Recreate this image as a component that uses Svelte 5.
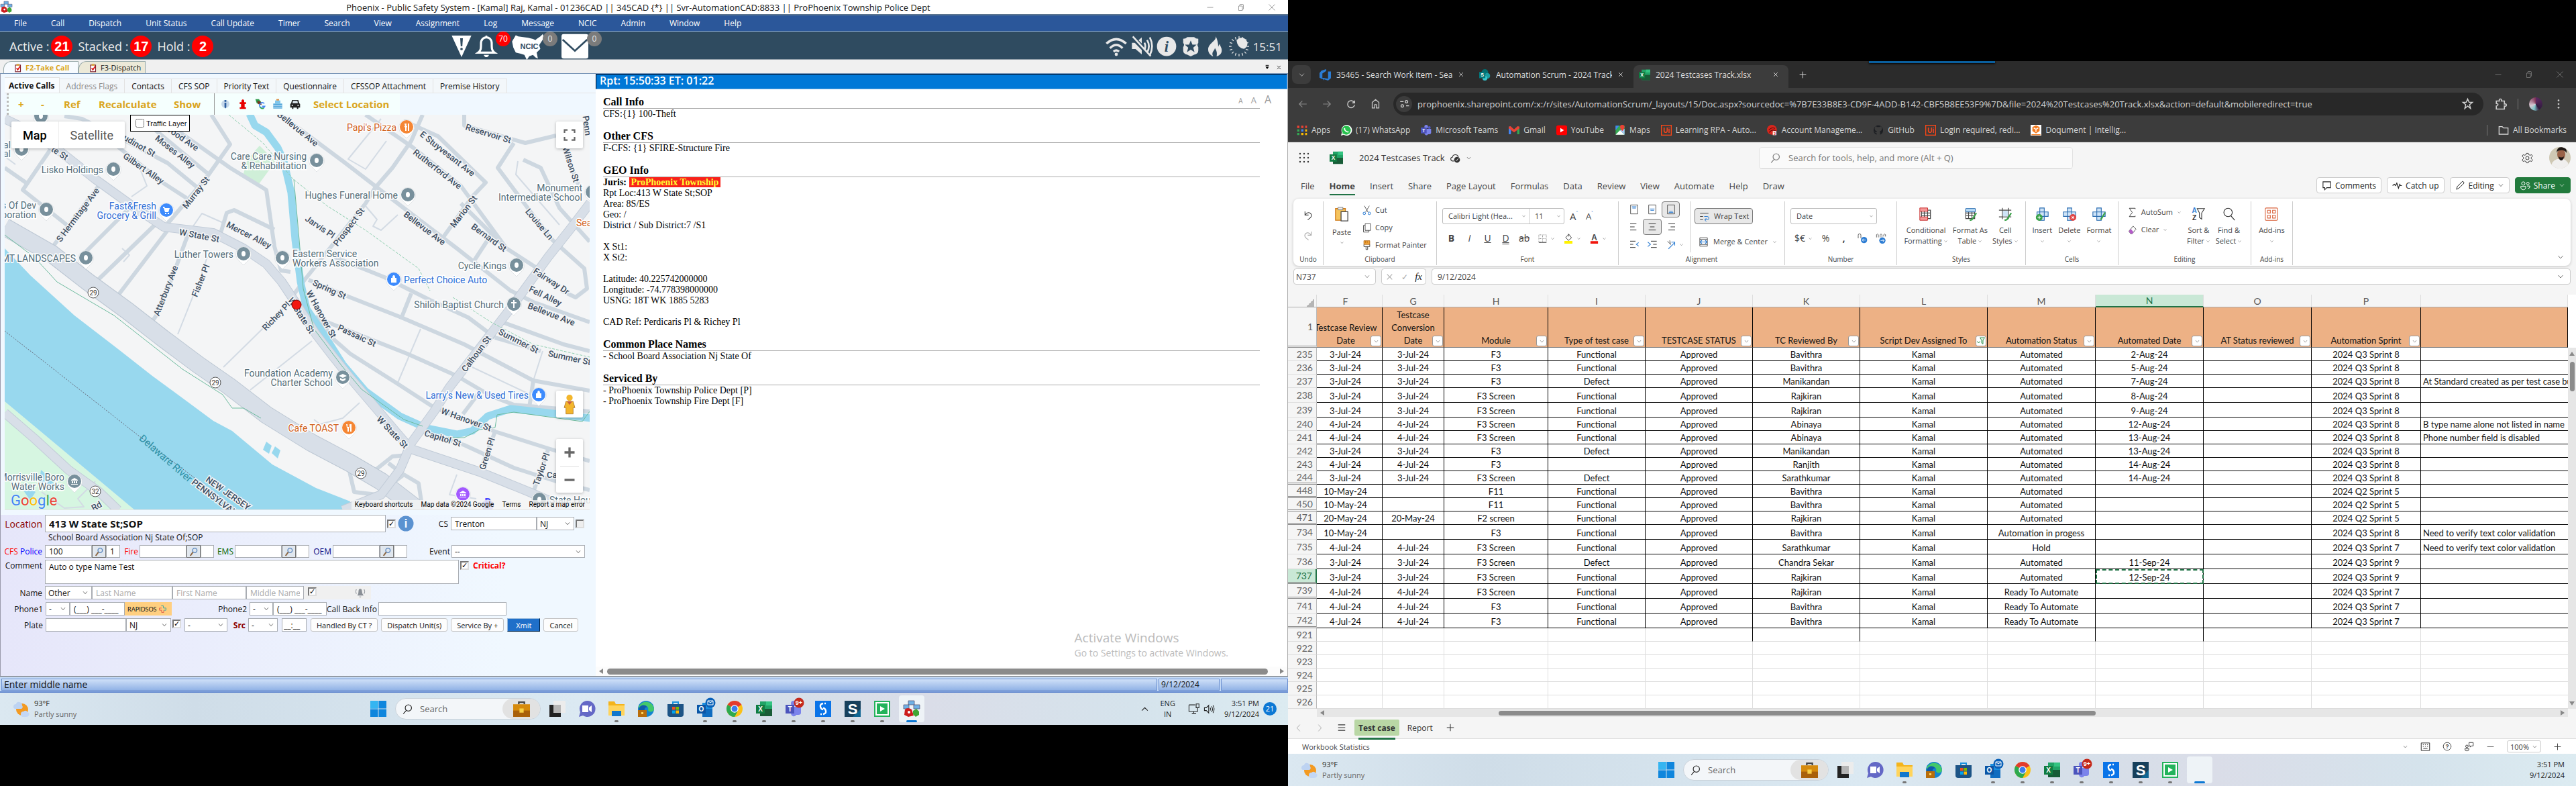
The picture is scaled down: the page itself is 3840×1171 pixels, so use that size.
<script>
  const circle = (x, y, r) => `M${x - r} ${y}a${r} ${r} 0 1 0 ${2 * r} 0a${r} ${r} 0 1 0 ${-2 * r} 0z`;
  const line = (d, s = 'currentColor', w = 1.5) => ({ d, s, w });
  const fill = (d, f = 'currentColor') => ({ d, f });
  const glyph = (t, x, y, size, f = '#fff') => ({ t, x, y, size, f });

  const sheetGrid = [line('M4 5h16v15H4zM4 10h16M4 15h16M9 5v15M15 5v15', '#444', 1.4)];

  const icons = {
    chev: [line('M5 8l7 8 7-8')],
    up: [line('M4 16l8-8 8 8', 'currentColor', 2)],
    close: [line('M5 5l14 14M19 5L5 19', 'currentColor', 2)],
    thinClose: [line('M3 3l18 18M21 3L3 21', 'currentColor', 1.5)],
    minus: [line('M3 12h18')],
    plus: [line('M12 3v18M3 12h18', 'currentColor', 1.8)],
    restore: [line('M5 8h11v13H5zM8 8V5q0-2 2-2h7q2 0 2 2v11q0 2-2 2h-1', 'currentColor', 1.4)],
    bigPlus: [line('M12 3v18M3 12h18', '#666', 4)],
    bigMinus: [line('M3 12h18', '#666', 4)],
    alert: [fill('M1 0h22L12 24z'), fill('M10.500 3h3l-.6 9h-1.800z', '#2f4b60'), fill(circle(12, 15, 1.4), '#2f4b60')],
    bell: [line('M3 19c3-2 3-5 3-10 0-5 3-7 6-7s6 2 6 7c0 5 0 8 3 10z', 'currentColor', 2.4), fill('M9 21.500h6q-1 2.500-3 2.500t-3-2.500zM11 0h2v3h-2z')],
    usa: [fill('M1 3l2 1 8 1 4 1 2 1 1-1 3-2 2-2 1 3-2 3-2 3 1 3-3 3 1 5-2-1-2-2-3 1-2 3-2-4-3-1-4-1-2-4-1-5z'), glyph('NCIC', 12, 14, 6, '#2f4b60')],
    mail: [fill('M2 1h20q2 0 2 2v18q0 2-2 2H2q-2 0-2-2V3q0-2 2-2z'), line('M1 6l11 10L23 6', '#2f4b60', 1.6)],
    wifi: [line('M1 9q11-10 22 0M5 14q7-7 14 0M9 18q3-3 6 0', 'currentColor', 2.6), fill(circle(12, 21, 1.8))],
    mute: [fill('M1 8h4l7-6v19l-7-6H1z'), line('M1 1l21 22', '#2f4b60', 5), line('M2 1l20 22M15 8q2 4 0 8M18 5q4 7 0 14M21 2q5 10 0 20', 'currentColor', 2)],
    info: [fill(circle(12, 12, 11.500)), { ...glyph('i', 12, 18, 18, '#2f4b60'), serif: true }],
    infoBlue: [fill(circle(12, 12, 11.500), '#5b92d0'), glyph('i', 12, 18, 18, '#eef5ff')],
    shield: [fill('M3 3q3 0 5-2h8q2 2 5 2v5q-2 2 0 5v4q0 4-5 5l-4 2-4-2q-5-1-5-5v-4q2-3 0-5z'), fill('M12 5l2 5 5 0-4 3.500 1.500 5.500L12 16l-4.500 3L9 13.500 5 10l5 0z', '#2f4b60')],
    fire: [fill('M13 0c1 6-9 8-9 16 0 4 3 7 6 8-3-5 2-7 2-10 2 3 3 6 2 10 4-1 7-4 6-9-1-3-2-4-2-6-1 1-2 3-2 4 0-5-1-9-3-13z')],
    sunMoon: [line('M12 0v3M12 21v3M0 12h3M21 12h3M3.500 3.500l2 2M18.500 18.500l2 2M3.500 20.500l2-2M18.500 5.500l2-2M7.500 1l1 3M16.500 1l-1 3M7.500 23l1-3M16.500 23l-1-3M1 7.500l3 1M1 16.500l3-1M23 7.500l-3 1M23 16.500l-3-1', 'currentColor', 1), fill('M9 5a7 7 0 1 1 9 10q-8-1-9-10z')],
    clip: [fill('M4 4h15v19H4z', '#7c1f2c'), fill('M6 6h11v15H6z', '#fff'), fill('M8 2h7v5H8z', '#d9a441'), line('M8 13l3 4 6-9', '#e01515', 3)],
    infoBall: [fill(circle(12, 12, 9), '#c6d8ea'), fill('M10 3h4v4h-4zM10 9h4v10l-2 3-2-3z', '#2a5d9f')],
    hydrant: [fill('M9 4q3-5 6 0v4h4v4h-3v7h3v4H5v-4h3v-7H5V8h4z', '#e80000')],
    google: [fill('M1 1h8l6 8-3 4-8-3z', '#2e9a4b'), fill('M5 5l8 2 2 7-8-2z', '#7a3320'), line('M21 11a6 6 0 1 0 1 6h-6', '#4285f4', 2.500), line('M11 18a6 6 0 0 0 9 3', '#34a853', 2.500)],
    tower: [fill('M2 11h20v11H2z', '#4aa3d8'), fill('M6 4h12v8H6z', '#7fc6ea'), fill('M9 1h6v3H9z', '#d98a3d'), line('M2 15h20M2 19h20', '#e9f6ff', 1.5)],
    car: [fill('M5 3h14l2 7 2 2v8h-4v3h-3v-3H8v3H5v-3H1v-8l2-2z', '#222'), fill('M7 5h10l1 5H6z', '#dfeaf0'), fill(circle(5.500, 15, 1.500), '#fff'), fill(circle(18.500, 15, 1.500), '#fff')],
    expand: [line('M2 8V2h6M16 2h6v6M22 16v6h-6M8 22H2v-6', '#666', 3)],
    pegman: [fill(circle(12, 5, 3.500), '#f3b62c'), fill('M8 9h8l2 7h-2v7H8v-7H6z', '#f3b62c'), line('M8 9h8l2 7h-2v7H8v-7H6z', '#a9742a', 0.6), fill('M9 9h6l-3 4z', '#c95e3c')],
    lens: [fill('M1 1h22v22H1z', '#dfe6ee'), line(circle(14, 9, 5), '#5b87bf', 2), line('M10 13l-6 8', '#8c6642', 3)],
    alarm: [fill('M7 17q2-3 2-8 0-4 3-4t3 4q0 5 3 8zM10 19h4q-2 3-4 0z', '#8a8f96'), line('M5 6q-2 4 0 8M19 6q2 4 0 8', '#8a8f96', 1.2)],
    cross: [line('M8 3h6v6M21 9v6h-6', '#3fa7a0', 1.8), line('M9 9H3v6h6M9 15v6h6', '#e0604c', 1.8), line('M14 9h7', '#3fa7a0', 1.8), line('M15 15v6', '#e0604c', 1.8)],
    sunny: [fill(circle(13, 13, 9), '#f39a21'), fill('M0 9q0-4 4-4 1-4 5-3t4 5q2 3-1 5H3q-3 0-3-3z', '#bdd3f2'), fill('M11 20q0-4 4-4 4-3 6 1 4 1 2 5-1 2-4 2h-5q-3 0-3-4z', '#c3d7f5')],
    win: [fill('M0 0h11.500v11.500H0zM12.500 0H24v11.500H12.500zM0 12.500h11.500V24H0zM12.500 12.500H24V24H12.500z', '#0f86dd'), fill('M0 0h11.500v11.500H0z', '#35b5f1')],
    magnify: [line(circle(14, 9, 7.500), 'currentColor', 1.8), line('M9 15l-7 8', 'currentColor', 1.800)],
    find: [line(circle(10, 9, 7.500), '#333', 1.400), line('M15 15l7 8', '#333', 1.400)],
    briefcase: [line('M8 5V2h8v3', '#444', 2.200), fill('M0 5h24v18H0z', '#d68a0c'), fill('M0 14h24v9H0z', '#a9600a'), fill('M9 11h6v6H9z', '#f7cf46')],
    taskview: [fill('M0 6h17v18H0z', '#222'), fill('M6 0h18v18H6z', '#ececec'), fill('M6 6h11v12H6z', '#b5b5b5')],
    chat: [fill('M12 0a12 12 0 1 1-6 22L0 24l2-7A12 12 0 0 1 12 0z', '#6468c6'), fill('M5 7h9v10H5zM15 10l4-3v10l-4-3z', '#fff')],
    folder: [fill('M0 1h9l2 4h13v17H0z', '#f4b41c'), fill('M0 7h24v15H0z', '#ffd45c'), fill('M5 15h14v8H5z', '#1177cc')],
    edge: [fill(circle(12, 12, 12), '#1485cf'), fill('M1 9a12 12 0 0 1 23 3c0 5-8 6-9 2 2-5-4-8-8-6-3 1-5 3-6 6z', '#43c86b'), fill('M1 13c1-7 10-9 13-3-3-1-5 2-4 6H1z', '#0f5aa8'), fill('M0 14h13v10H0z', '#b96d0b'), fill('M5 17h3v3H5z', '#ffd45c')],
    store: [line('M8 6V2h8v4', '#1b93e0', 2), fill('M0 5h24v15q0 4-4 4H4q-4 0-4-4z', '#1d5486'), fill('M7 9h4.500v4.500H7z', '#f25022'), fill('M12.500 9H17v4.500h-4.500z', '#7fba00'), fill('M7 14.500h4.500V19H7z', '#00a4ef'), fill('M12.500 14.500H17V19h-4.500z', '#ffb900')],
    outlook: [fill('M8 3h15v18H8z', '#1a8fe0'), fill('M8 12h15v12H8z', '#0f6cc0'), fill('M0 6h13v13H0z', '#0b55a5'), glyph('O', 6.500, 16, 10), fill(circle(20, 3, 7.500), '#0a61b8'), line('M16 0h8v6h-8zM16 0l4 3 4-3', '#fff', 1)],
    chrome: [fill(circle(12, 12, 12), '#fbc116'), fill('M12 12L1.600 6A12 12 0 0 1 22.400 6z', '#e33b2e'), fill('M12 12L1.600 6A12 12 0 0 0 12 24l5-9z', '#2da94f'), fill(circle(12, 12, 5.800), '#fff'), fill(circle(12, 12, 4.500), '#3b7ded')],
    excel: [fill('M6 1h18v22H6z', '#21a366'), fill('M6 12h18v11H6z', '#185c37'), fill('M15 1h9v6h-9z', '#33c481'), fill('M0 6h13v13H0z', '#107c41'), glyph('X', 6.500, 16, 10)],
    teams: [fill(circle(19, 6, 3), '#5059c9'), fill(circle(12, 4, 4), '#7b83eb'), fill('M8 9h15v9q0 3-4 3h-3q-2 3-5 2-3-1-3-5z', '#7b83eb'), fill('M0 6h13v13H0z', '#4b53bc'), glyph('T', 6.500, 16, 10)],
    teamsTask: [fill('M8 9h15v9q0 3-4 3h-3q-2 3-5 2-3-1-3-5z', '#7b83eb'), fill(circle(12, 4, 4), '#7b83eb'), fill('M0 6h13v13H0z', '#4b53bc'), glyph('T', 6.500, 16, 10), fill(circle(20, 3, 7.500), '#c4291c'), glyph('9+', 20, 6, 9)],
    sBlue: [fill('M0 0h24v24H0z', '#0a74e8'), line('M12 4q-5 1-4 5t4 4M12 20q5-1 4-5t-4-4M14 4h2M8 20h2', '#fff', 2.400)],
    sNavy: [fill('M0 0h24v24H0z', '#17405c'), fill('M12 24L24 12v12z', '#0f6592'), glyph('S', 12, 20, 22)],
    play: [fill('M0 0h24v24H0z', '#23b35b'), fill('M2 2h20v20H2z', '#fff'), fill('M4 4h16v16H4z', '#23b35b'), fill('M9 8l7 4-7 4z', '#fff')],
    phoenix: [fill('M7 0h9v6H7zM0 6h8v6H0zM15 6h9v6h-9z', '#6fb1e6'), line('M7 0h9v6H7zM0 6h8v6H0zM15 6h9v6h-9z', '#557', 0.8), fill('M2 13q4-4 10 0l3 9-8 2-6-3z', '#cc1c1c'), fill(circle(8, 17, 2), '#fff'), fill('M14 15l5-3 4 4v5l-5 3-4-4z', '#3fa535')],
    blank: [],
    monitor: [line('M2 3h13M2 3v14h18V12M8 21h9M12 17v4M17 1h6v8h-6zM20 9v4', '#222', 1.500)],
    sound: [line('M2 9h4l5-5v16l-5-5H2zM14 9q2 3 0 6M17 6q4 6 0 12M20 4q5 8 0 16', '#222', 1.500)],
    devops: [fill('M0 18V8l4-5 10-3v4L6 9v12zM24 5v14l-6 5-9-3v3l-4-6 13 2V5z', '#2b7cd3')],
    sharepoint: [fill(circle(12, 7, 7), '#036c70'), fill(circle(17, 14, 6), '#1a9ba1'), fill(circle(12, 19, 5), '#37c6d0'), fill('M0 6h13v13H0z', '#03787c'), glyph('S', 6.500, 16, 10)],
    back: [line('M22 12H3M11 4l-8 8 8 8', 'currentColor', 2)],
    fwd: [line('M2 12h19M13 4l8 8-8 8', 'currentColor', 2)],
    reload: [line('M20 8a9 9 0 1 0 1 6M21 3v6h-6', 'currentColor', 2.400)],
    home: [line('M4 22V9l8-7 8 7v13h-6v-8h-4v8z', 'currentColor', 2)],
    tune: [line('M2 7h8M16 17h7', 'currentColor', 2.200), line(circle(17, 7, 3), 'currentColor', 2), line(circle(7, 17, 3), 'currentColor', 2)],
    star: [line('M12 2l3 7h7l-6 5 2 8-6-5-6 5 2-8-6-5h7z', 'currentColor', 2)],
    puzzle: [line('M3 6h6q-1-4 2-4t2 4h6v6q4-1 4 2t-4 2v6H3v-6q4-1 3-4-1-1-3-1z', 'currentColor', 2.200)],
    dots: [fill(circle(12, 4, 2)), fill(circle(12, 12, 2)), fill(circle(12, 20, 2))],
    apps: [fill('M1 2h5v5H1zM10 2h5v5h-5zM19 2h4v5h-4z', '#ea4335'), fill('M1 10h5v5H1zM1 18h5v5H1z', '#34a853'), fill('M10 10h5v5h-5z', '#4285f4'), fill('M19 10h4v5h-4zM10 18h5v5h-5zM19 18h4v5h-4z', '#fbbc05')],
    whatsapp: [fill('M12 0a12 12 0 1 1-6 22l-6 2 2-7A12 12 0 0 1 12 0z', '#fff'), fill('M12 2a10 10 0 1 1-6 18l-3 1 1-3A10 10 0 0 1 12 2z', '#27c04d'), line('M8 7q-1 4 3 7t6 1', '#fff', 2.600)],
    gmail: [fill('M0 4h5v17H1q-1 0-1-1z', '#4285f4'), fill('M19 4h5v16q0 1-1 1h-4z', '#34a853'), fill('M0 4l4-1 8 7 8-7 4 1v4l-12 9L0 8z', '#ea4335')],
    youtube: [fill('M4 1h16q4 0 4 4v14q0 4-4 4H4q-4 0-4-4V5q0-4 4-4z', '#f00'), fill('M9 7l8 5-8 5z', '#fff')],
    maps: [fill('M2 2h20v20H2z', '#35a853'), fill('M2 22l10-10 10 10z', '#fff'), fill('M2 2h8L2 12z', '#4285f4'), fill('M12 12l10 10V9z', '#a9c7f7'), fill('M17 0a5 5 0 0 1 5 5q0 3-5 9-5-6-5-9a5 5 0 0 1 5-5z', '#ea4335')],
    uipath: [fill('M0 0h24v24H0z', '#fa4616'), fill('M2 2h20v20H2z', '#3c3c3c'), glyph('Ui', 12, 18, 15, '#fa4616')],
    account: [fill(circle(11, 11, 11), '#d8261c'), line('M4 12q6-8 14-4M5 17q6-8 14-4', '#5c0c0c', 1.600), fill('M13 14h8v9h-8z', '#fff'), glyph('3', 17, 22, 9, '#d8261c')],
    github: [fill('M12 1a11 11 0 0 0-4 21v-4q-4 0-5-3 5 3 6-1-6-1-5-7l1-4q3 0 4 2h6q1-2 4-2l1 4q1 6-5 7 1 1 1 3v5A11 11 0 0 0 12 1z', '#1c1e22')],
    doq: [fill('M0 0h24v24H0z', '#fff'), fill('M12 1l8 4v9l-8 5-8-5V5z', '#f47c20'), line('M7 7l5 3 5-3M12 10v6', '#fff', 2), line('M2 22h20', '#f47c20', 2)],
    folderLine: [line('M2 4h7l3 3h10v14H2z', 'currentColor', 2)],
    waffle: [3, 12, 21].flatMap((y) => [3, 12, 21].map((x) => fill(circle(x, y, 1.8), '#333'))),
    cloud: [line('M9 19H5q-4-1-4-5t4-4q1-6 7-6t7 6', '#333', 1.800), fill(circle(16, 16, 7), '#333'), line('M13 16l2 2 4-5', '#fff', 1.600)],
    gear: [line(circle(12, 12, 3.500), '#333', 1.400), line('M10 2h4l1 3 3 1 3-1 2 3-3 3v2l3 3-2 3-3-1-3 1-1 3h-4l-1-3-3-1-3 1-2-3 3-3v-2L1 8l2-3 3 1 3-1z', '#333', 1.300)],
    comment: [line('M3 3h18v14h-9l-5 5v-5H3z', '#222', 1.700)],
    catchUp: [line('M1 12l4-3 3 3 3-6 4 12 3-9 2 3h3', '#222', 1.900)],
    pencil: [line('M3 21l2-7L17 2q3 0 4 4L9 18z', '#222', 1.600)],
    people: [line(circle(7, 7, 4), '#fff', 1.600), line(circle(18, 7, 3), '#fff', 1.600), line('M1 14h12q0 8-6 8t-6-8zM16 13h7q0 6-5 6', '#fff', 1.600)],
    undo: [line('M5 3v8h8M5 11q6-8 12-4 5 5 0 10l-6 5', '#444', 1.700)],
    redo: [line('M19 3v8h-8M19 11q-6-8-12-4-5 5 0 10l6 5', '#aaa', 1.700)],
    paste: [fill('M2 3h16v19H2z', '#f5c45e'), line('M2 3h16v19H2z', '#d07b1a', 1.400), fill('M6 1h8v4H6z', '#eee'), line('M6 1h8v4H6z', '#777', 1), fill('M11 8h11v15H11z', '#fff'), line('M11 8h11v15H11z', '#444', 1.400)],
    cut: [line('M6 1l9 15M18 1L9 16', '#444', 1.400), line(circle(6, 19, 3), '#2b7cd3', 1.600), line(circle(18, 19, 3), '#2b7cd3', 1.600)],
    copy: [line('M8 2h13v16H8zM8 6H4v16h13v-4', '#444', 1.400)],
    painter: [fill('M5 1h14v9H5z', '#f0a43c'), line('M5 1h14v9H5zM9 2v4M13 2v4', '#a85b00', 1.200), line('M5 10v5h14v-5M10 15v7h4v-7', '#444', 1.500)],
    border: [{ ...line('M3 3h18v18H3zM12 3v18M3 12h18', '#666', 1.300), dash: '1.500 2' }, line('M3 21h18', '#333', 1.600)],
    bucket: [line('M6 10l7-7 6 8-7 6zM12 2v6', '#444', 1.500), fill('M3 18h18v6H3z', '#fff200')],
    fontColor: [glyph('A', 12, 16, 19, '#444'), fill('M3 18h18v6H3z', '#f1150c')],
    alTop: [line('M4 2h16v20H4z', '#444', 1.300), line('M7 6h10M8 9h8', '#2b7cd3', 1.500)],
    alMid: [line('M4 2h16v20H4z', '#444', 1.300), line('M7 11h10M8 14h8', '#2b7cd3', 1.500)],
    alBot: [line('M4 2h16v20H4z', '#444', 1.300), line('M8 16h8M7 19h10', '#2b7cd3', 1.500)],
    left: [line('M3 5h14M3 12h10M3 19h14', '#333', 1.500)],
    center: [line('M4 5h16M7 12h10M4 19h16', '#333', 1.500)],
    right: [line('M6 5h15M11 12h10M6 19h15', '#333', 1.500)],
    outdent: [line('M3 5h12M3 12h7M3 19h12', '#333', 1.500), line('M22 8l-5 4 5 4', '#2b7cd3', 1.700)],
    indent: [line('M9 5h13M14 12h8M9 19h13', '#333', 1.500), line('M2 7l6 5-6 5', '#2b7cd3', 1.700)],
    orient: [line('M5 22L20 7M20 14V6h-8', '#2b7cd3', 1.700), line('M3 4l6 6M8 2l2 10', '#333', 1.400)],
    wrap: [line('M2 4h20M2 12h7M2 20h7', '#333', 1.500), line('M12 12h7q4 0 4 4t-4 4h-5M17 16l-4 4 4 4', '#2b7cd3', 1.600)],
    merge: [line('M3 2h18v20H3zM3 6h18M3 18h18', '#333', 1.300), line('M4 12h16M8 8l-4 4 4 4M16 8l4 4-4 4', '#2b7cd3', 1.800)],
    dec: [line('M3 12V5q0-3 3-3t3 3v7', '#444', 1.300), fill(circle(16, 16, 7), '#2b7cd3'), line('M20 16h-8M15 13l-3 3 3 3', '#fff', 1.300)],
    inc: [line('M2 10V4q2-3 4 0v6M10 10V4q2-3 4 0v6M18 8V4q2-3 4 0v4', '#444', 1.200), fill(circle(15, 17, 7), '#2b7cd3'), line('M11 17h8M16 14l3 3-3 3', '#fff', 1.300)],
    cond: [...sheetGrid, fill('M1 1h14v6H1zM1 17h14v6H1z', '#f59a9a'), line('M1 1h14v6H1zM1 17h14v6H1zM1 7v10', '#c93232', 1.200)],
    table: [...sheetGrid, fill('M4 2h17v6H4z', '#b9dcf6'), line('M4 2h17v6H4z', '#2b6cb0', 1.200), line('M23 10l-8 12-4 1', '#3aa34a', 2.600)],
    cell: [line('M7 1v20M18 1v20M1 5h22M1 17h22', '#444', 1.400), fill('M8 6h9v10H8z', '#cfe4f7'), line('M23 10l-8 12-4 1', '#3aa34a', 2.600)],
    insert: [fill('M8 1h8v7h7v8h-7v7H8v-7H3V8h5z', '#cfe4f7'), line('M8 1h8v7h7v8h-7v7H8v-7H3V8h5zM8 8h8v8H8z', '#2b6cb0', 1.300), fill(circle(7, 18, 6), '#3aa34a'), line('M7 15v6M4 18h6', '#fff', 1.400)],
    remove: [fill('M8 1h8v7h7v8h-7v7H8v-7H1V8h7z', '#cfe4f7'), line('M8 1h8v7h7v8h-7v7H8v-7H1V8h7zM8 8h8v8H8z', '#2b6cb0', 1.300), fill(circle(18, 18, 6), '#e04545'), line('M16 16l4 4M20 16l-4 4', '#fff', 1.400)],
    format: [fill('M8 1h8v7h7v8h-7v7H8v-7H1V8h7z', '#cfe4f7'), line('M8 1h8v7h7v8h-7v7H8v-7H1V8h7zM8 8h8v8H8z', '#2b6cb0', 1.300), line('M23 9l-8 13', '#3aa34a', 2.800)],
    sigma: [line('M19 4V2H5l7 10L5 22h14v-2', '#333', 1.500)],
    eraser: [line('M4 15L14 3l7 7-9 11H8z', '#444', 1.400), fill('M4 15l5-5 6 7-3 4H8z', '#b45bc8')],
    sort: [glyph('A', 5, 10, 12, '#2b7cd3'), glyph('Z', 5, 23, 12, '#333'), line('M10 2h13l-5 8v11l-4-3v-8z', '#333', 1.300)],
    addins: [line('M3 1h18q2 0 2 2v18q0 2-2 2H3q-2 0-2-2V3q0-2 2-2zM5 5h5v5H5zM14 5h5v5h-5zM5 14h5v5H5zM14 14h5v5h-5z', '#d9623b', 1.300)],
    filter: [fill('M9 2h14l-5 8v11l-4-3v-8z', '#dff2e4'), line('M9 2h14l-5 8v11l-4-3v-8z', '#1f8a43', 1.800), line('M1 13l4 5 4-5', '#1f8a43', 2)],
    list: [line('M3 5h18M3 12h18M3 19h18', '#333', 2)],
    prev: [line('M16 3l-8 9 8 9', '#aaa', 1.800)],
    next: [line('M8 3l8 9-8 9', '#aaa', 1.800)],
    keyboard: [line('M2 3h20v18H2zM7 16h10M6 7h2M11 7h2M16 7h2M6 11h2M11 11h2M16 11h2', '#333', 1.600)],
    help: [line(circle(12, 12, 10), '#333', 1.500), glyph('?', 12, 17, 14, '#333')],
    feedback: [line('M12 2h10v8h-4l-3 3v-3h-3z', '#333', 1.500), line(circle(7, 11, 3), '#333', 1.500), line('M2 17h10q0 5-5 5t-5-5z', '#333', 1.500)],
    menuDrop: [line('M5 4h14', '#000', 3), fill('M4 10h16l-8 11z', '#000')]
  };

  const menus = ['File', 'Call', 'Dispatch', 'Unit Status', 'Call Update', 'Timer', 'Search', 'View', 'Assignment', 'Log', 'Message', 'NCIC', 'Admin', 'Window', 'Help'];
  const counters = [['Active :', 21], ['Stacked :', 17], ['Hold :', 2]];
  const callTabs = ['Active Calls', 'Address Flags', 'Contacts', 'CFS SOP', 'Priority Text', 'Questionnaire', 'CFSSOP Attachment', 'Premise History'];

  const sections = [
    { title: 'Call Info', lines: ['CFS:{1} 100-Theft'] },
    { title: 'Other CFS', lines: ['F-CFS: {1} SFIRE-Structure Fire'] },
    { title: 'GEO Info', juris: 'ProPhoenix Township', lines: ['Rpt Loc:413 W State St;SOP', 'Area: 8S/ES', 'Geo: /', 'District / Sub District:7 /S1', '', 'X St1:', 'X St2:', '', 'Latitude: 40.225742000000', 'Longitude: -74.778398000000', 'USNG: 18T WK 1885 5283', '', 'CAD Ref: Perdicaris Pl & Richey Pl'] },
    { title: 'Common Place Names', lines: ['- School Board Association Nj State Of'] },
    { title: 'Serviced By', lines: ['- ProPhoenix Township Police Dept [P]', '- ProPhoenix Township Fire Dept [F]'] }
  ];

  const taskApps = [
    ['taskview', false], ['chat', false], ['folder', true], ['edge', false], ['store', false], ['outlook', true], ['chrome', true],
    ['excel', true], ['teamsTask', true], ['sBlue', true], ['sNavy', true], ['play', true]
  ];

  const SX = 0.5676, SY = 1 / 3;
  const mx = (x) => Math.round(x * SX - 7);
  const my = (y) => Math.round(y * SY - 1);
  const path = (pts, close = false) => pts.map(([x, y], i) => `${i ? 'L' : 'M'}${mx(x)} ${my(y)}`).join('') + (close ? 'Z' : '');

  const river = [[12, 600], [80, 720], [195, 900], [310, 1050], [400, 1170], [480, 1270], [560, 1370], [610, 1415], [715, 1565], [830, 1670], [920, 1730], [915, 1770], [355, 1770], [12, 1285]];
  const meadow = [[12, 1285], [355, 1770], [12, 1770]];
  const park = [[682, 140], [650, 200], [638, 275], [680, 312], [705, 255], [722, 210]];
  const canal = [[655, 0], [670, 50], [700, 80], [730, 150], [745, 210], [765, 350], [775, 560], [790, 750], [805, 870], [850, 980], [900, 1120], [960, 1240], [1050, 1350], [1120, 1405], [1200, 1430], [1240, 1415], [1280, 1350], [1340, 1318], [1440, 1335], [1550, 1358]];
  const stateLine = [[12, 970], [360, 1430], [620, 1767]];
  const greenWays = [
    [[12, 540], [90, 640], [150, 750], [300, 900], [480, 1140], [585, 1255], [610, 1315], [640, 1315], [685, 1360]],
    [[772, 290], [785, 560], [797, 780], [825, 960], [900, 1130], [950, 1230], [1060, 1365], [1110, 1395]],
    [[1160, 1445], [1220, 1445], [1260, 1410], [1300, 1400], [1305, 1345], [1350, 1332], [1530, 1375], [1548, 1330]]
  ];
  const dashedWays = [
    [[600, 3], [690, 130], [770, 290], [860, 410], [960, 520], [1100, 690], [1130, 790]],
    [[1190, 820], [1290, 930], [1400, 1030], [1548, 1085]]
  ];
  const highways = [
    [[12, 505], [135, 625], [230, 750], [335, 880], [430, 1005], [520, 1120], [600, 1215], [700, 1345], [820, 1470], [920, 1560], [1000, 1640], [1100, 1770]]
  ];
  const majors = [
    [[12, 20], [60, 60], [150, 155], [250, 290], [350, 415], [430, 505], [560, 530], [640, 600], [700, 670], [740, 750], [775, 840], [830, 985], [870, 1075], [920, 1180], [990, 1320], [1070, 1480]],
    [[1075, 1495], [1260, 1600], [1390, 1690], [1500, 1770]],
    [[1550, 395], [1500, 510], [1440, 640], [1350, 850], [1290, 980], [1180, 1220], [1140, 1330], [1080, 1470], [1050, 1590], [1000, 1700], [900, 1770]],
    [[12, 1335], [90, 1450], [180, 1590], [260, 1690], [310, 1770]]
  ];
  const streets = [
    [[1110, 3], [1080, 120], [1030, 240], [985, 330], [960, 400], [870, 590], [800, 740], [770, 810]],
    [[735, 0], [900, 210], [1060, 420], [1200, 600], [1340, 790], [1400, 840], [1548, 930]],
    [[960, 3], [1085, 150], [1210, 320], [1330, 600], [1420, 700]],
    [[1060, 30], [1150, 100], [1275, 305], [1240, 370], [1165, 550]],
    [[1210, 400], [1330, 600]],
    [[1290, 540], [1245, 655]],
    [[1220, 3], [1220, 50], [1380, 130], [1460, 95]],
    [[1350, 130], [1308, 240], [1390, 430], [1450, 560], [1535, 690], [1542, 780], [1512, 820], [1475, 790]],
    [[1375, 205], [1420, 240], [1470, 420], [1548, 570]],
    [[1480, 150], [1520, 320]],
    [[400, 60], [545, 265]],
    [[430, 30], [605, 240], [700, 340], [720, 590], [738, 700], [762, 704]],
    [[555, 3], [605, 135], [545, 280], [440, 490]],
    [[290, 120], [430, 310], [490, 375]],
    [[170, 10], [215, 20], [320, 110], [440, 220], [520, 330]],
    [[265, 310], [140, 590]],
    [[135, 150], [60, 340], [180, 500]],
    [[12, 240], [70, 310]],
    [[340, 420], [225, 615]],
    [[410, 490], [255, 745], [290, 790]],
    [[440, 520], [310, 810]],
    [[580, 530], [595, 440], [615, 430], [720, 515]],
    [[495, 530], [455, 720], [410, 900], [390, 950]],
    [[810, 740], [920, 820], [1050, 905], [1220, 1030], [1400, 1190], [1548, 1235]],
    [[880, 640], [1010, 730], [1130, 830], [1230, 910], [1300, 1000]],
    [[1080, 800], [1055, 905]],
    [[860, 930], [1070, 1070], [1200, 1170], [1290, 1260], [1350, 1300], [1548, 1330]],
    [[830, 900], [880, 1010], [920, 1070], [1040, 1200], [1140, 1310], [1300, 1420], [1440, 1495], [1548, 1550]],
    [[1110, 1420], [1220, 1480], [1350, 1580], [1460, 1640], [1548, 1680]],
    [[1320, 930], [1480, 1030], [1548, 1060]],
    [[1300, 1000], [1420, 1060]],
    [[1265, 1230], [1215, 1340]],
    [[1300, 1420], [1260, 1600]],
    [[1440, 1500], [1400, 1690]],
    [[1400, 1190], [1390, 1310]],
    [[915, 1560], [920, 1610], [930, 1690], [990, 1700], [1060, 1610], [1100, 1650], [1110, 1770]],
    [[980, 1600], [1030, 1530], [1070, 1525]],
    [[1020, 1560], [1050, 1600], [1030, 1650]]
  ];
  const lanes = [
    [[545, 640], [520, 760], [467, 985]],
    [[765, 835], [587, 1130]],
    [[820, 1015], [658, 1232]],
    [[1360, 210], [1355, 270], [1470, 495]],
    [[1015, 120], [960, 245], [915, 200], [1000, 20]],
    [[960, 410], [990, 470], [980, 500], [1000, 520], [1045, 450]],
    [[945, 1290], [900, 1360], [840, 1385], [825, 1365]],
    [[1105, 960], [1045, 1200]],
    [[1240, 1130], [1400, 1260]],
    [[495, 530], [530, 445], [590, 490]],
    [[365, 230], [385, 320], [345, 370]],
    [[12, 190], [40, 225]],
    [[110, 1690], [170, 1760], [220, 1755], [205, 1720], [250, 1640]],
    [[1425, 1060], [1400, 1190]],
    [[320, 600], [340, 630], [325, 660]],
    [[1200, 1610], [1180, 1700], [1250, 1720]]
  ];

  const roadLabels = [
    ['Boudinot St', 310, 85, 400, 175], ['Moses Alley', 410, 100, 510, 235], ['Wood Ave', 440, 60, 515, 150],
    ['te St', 135, 150, 180, 200], ['Gilbert Alley', 325, 180, 428, 305], ['Murray St', 485, 415, 545, 285],
    ['S Hermitage Ave', 155, 565, 255, 335], ['W State St', 472, 525, 576, 560], ['Mercer Alley', 597, 490, 712, 590],
    ['Bellevue Ave', 735, 0, 830, 130], ['Jarvis Pl', 805, 465, 875, 545], ['Prospect St', 880, 585, 953, 422],
    ['Bellevue Ave', 1062, 440, 1168, 578], ['Rutherford Ave', 1087, 165, 1210, 328], ['E Stuyvesant Ave', 1105, 82, 1247, 272],
    ['Reservoir St', 1224, 55, 1342, 118], ['Marion St', 1187, 500, 1248, 367], ['Bernard St', 1240, 495, 1330, 608],
    ['Louise Ln', 1384, 425, 1450, 558], ['Wilson St', 1485, 155, 1512, 295], ['Penn', 1538, 10, 1545, 90],
    ['Atterbury Ave', 410, 900, 460, 680], ['Fisher Pl', 512, 805, 542, 680], ['Spring St', 822, 750, 908, 815],
    ['W Hanover St', 810, 790, 878, 1000], ['Fell Alley', 1392, 780, 1472, 845], ['Fairway Dr', 1420, 715, 1478, 780],
    ['Richey Pl', 695, 955, 755, 850], ['W State St', 762, 825, 820, 975], ['Passaic St', 888, 950, 988, 1028],
    ['Calhoun St', 1218, 1148, 1285, 995], ['Summer St', 1310, 970, 1414, 1060], ['Summer St', 1442, 1070, 1548, 1110],
    ['Bellevue Ave', 1388, 855, 1510, 935], ['W State St', 992, 1355, 1068, 1490], ['W Hanover St', 1158, 1325, 1290, 1405],
    ['Capitol St', 1116, 1425, 1210, 1475], ['Green Pl', 1265, 1588, 1292, 1450], ['Taylor Pl', 1408, 1660, 1437, 1515],
    ['NEW JERSEY', 538, 1620, 660, 1768], ['PENNSYLVANIA', 506, 1640, 640, 1810], ['Rd', 240, 1765, 268, 1738]
  ].map(([t, x1, y1, x2, y2]) => ({
    t,
    x: mx((x1 + x2) / 2),
    y: my((y1 + y2) / 2),
    a: Math.round((Math.atan2((y2 - y1) * SY, (x2 - x1) * SX) * 180) / Math.PI)
  }));

  const grey = '#78909c', blue = '#3d8bfd', orange = '#f58634';
  const places = [
    { x: 108, y: 8, c: grey }, { x: 57, y: 155, c: grey }, { x: 297, y: 245, c: grey, l: ['Lisko Holdings'], s: -1 },
    { x: 121, y: 425, c: grey, l: ['s Of Dev', 'poration'], s: -1 },
    { x: 437, y: 428, c: blue, l: ['Fast&Fresh', 'Grocery & Grill'], s: -1, k: 'cart', ink: '#2f6fd6' },
    { x: 225, y: 642, c: grey, l: ['MT LANDSCAPES'], s: -1 }, { x: 831, y: 207, c: grey, l: ['Care Care Nursing', '& Rehabilitation'], s: -1 },
    { x: 1068, y: 57, c: orange, l: ["Papi's Pizza"], s: -1, k: 'food', ink: '#d0601a' },
    { x: 1071, y: 360, c: grey, l: ['Hughes Funeral Home'], s: -1 }, { x: 640, y: 624, c: grey, l: ['Luther Towers'], s: -1 },
    { x: 741, y: 642, c: grey, l: ['Eastern Service', 'Workers Association'], s: 1 },
    { x: 1034, y: 738, c: blue, l: ['Perfect Choice Auto'], s: 1, k: 'bag', ink: '#2f6fd6' },
    { x: 1356, y: 676, c: grey, l: ['Cycle Kings'], s: -1 }, { x: 1349, y: 850, c: grey, l: ['Shiloh Baptist Church'], s: -1, k: 'church' },
    { x: 1556, y: 348, c: grey, l: ['Monument', 'Intermediate School'], s: -1 },
    { x: 900, y: 1176, c: grey, l: ['Foundation Academy', 'Charter School'], s: -1, k: 'school' },
    { x: 917, y: 1402, c: orange, l: ['Cafe TOAST'], s: -1, k: 'food', ink: '#d0601a' },
    { x: 1415, y: 1255, c: blue, l: ["Larry's New & Used Tires"], s: -1, k: 'bag', ink: '#2f6fd6' },
    { x: 196, y: 1642, c: grey, l: ['Morrisville Boro', 'Water Works'], s: -1, k: 'hall' },
    { x: 1215, y: 1698, c: '#a259ff', k: 'hall' }, { x: 1416, y: 1722, c: grey, l: ['State House'], s: 1 }
  ].map((p) => ({ ...p, x: mx(p.x), y: my(p.y), l: p.l ?? [] }));
  const marks = {
    dot: 'M-3 0a3 4 0 1 0 6 0a3 4 0 1 0 -6 0z', food: 'M-4-5h1v4h1v-4h1v4h1v-4h1v5l-1 1v5h-2v-5l-1-1zM2-5h2v11h-2z',
    cart: 'M-5-5h2l1 2h7l-2 6h-5l-2-6h-1zM-2 4h2v2h-2zM2 4h2v2h-2z', bag: 'M-4-2h2q0-4 2-4t2 4h2v7h-8z', church: 'M-1-6h2v3h3v2h-3v7h-2v-7h-3v-2h3z',
    school: 'M-6-2l6-3 6 3-6 3zM-4 1l4 2 4-2v3l-4 2-4-2z', hall: 'M-5-2l5-3 5 3v1h-10zM-4 0h2v3h-2zM-1 0h2v3h-2zM2 0h2v3h-2zM-5 4h10v1h-10z'
  };
  const shields = [['29', 245, 797], ['29', 566, 1200], ['29', 948, 1606], ['32', 250, 1686]].map(([n, x, y]) => ({ n, x: mx(x), y: my(y) }));

  const chromeTabs = [['devops', '35465 - Search Work item - Sea'], ['sharepoint', 'Automation Scrum - 2024 Track'], ['excel', '2024 Testcases Track.xlsx']];
  const bookmarks = [
    ['apps', 'Apps'], ['whatsapp', '(17) WhatsApp'], ['teams', 'Microsoft Teams'], ['gmail', 'Gmail'], ['youtube', 'YouTube'], ['maps', 'Maps'],
    ['uipath', 'Learning RPA - Auto...'], ['account', 'Account Manageme...'], ['github', 'GitHub'], ['uipath', 'Login required, redi...'], ['doq', 'Doqument | Intellig...']
  ];
  const ribbonTabs = ['File', 'Home', 'Insert', 'Share', 'Page Layout', 'Formulas', 'Data', 'Review', 'View', 'Automate', 'Help', 'Draw'];

  const columns = [
    ['F', 'Testcase Review Date'], ['G', 'Testcase Conversion Date'], ['H', 'Module'], ['I', 'Type of test case'], ['J', 'TESTCASE STATUS'],
    ['K', 'TC Reviewed By'], ['L', 'Script Dev Assigned To'], ['M', 'Automation Status'], ['N', 'Automated Date'], ['O', 'AT Status reviewed'], ['P', 'Automation Sprint'], ['', '']
  ];
  const S = '2024 Q3 Sprint ';
  const raw = [
    [235, '3-Jul-24', '3-Jul-24', 'F3', 'Functional', 'Bavithra', 'Automated', '2-Aug-24', S + 8, ''],
    [236, '3-Jul-24', '3-Jul-24', 'F3', 'Functional', 'Bavithra', 'Automated', '5-Aug-24', S + 8, ''],
    [237, '3-Jul-24', '3-Jul-24', 'F3', 'Defect', 'Manikandan', 'Automated', '7-Aug-24', S + 8, 'At Standard created as per test case but'],
    [238, '3-Jul-24', '3-Jul-24', 'F3 Screen', 'Functional', 'Rajkiran', 'Automated', '8-Aug-24', S + 8, ''],
    [239, '3-Jul-24', '3-Jul-24', 'F3 Screen', 'Functional', 'Rajkiran', 'Automated', '9-Aug-24', S + 8, ''],
    [240, '4-Jul-24', '4-Jul-24', 'F3 Screen', 'Functional', 'Abinaya', 'Automated', '12-Aug-24', S + 8, 'B type name alone not listed in name'],
    [241, '4-Jul-24', '4-Jul-24', 'F3 Screen', 'Functional', 'Abinaya', 'Automated', '13-Aug-24', S + 8, 'Phone number field is disabled'],
    [242, '3-Jul-24', '3-Jul-24', 'F3', 'Defect', 'Manikandan', 'Automated', '13-Aug-24', S + 8, ''],
    [243, '4-Jul-24', '4-Jul-24', 'F3', '', 'Ranjith', 'Automated', '14-Aug-24', S + 8, ''],
    [244, '3-Jul-24', '3-Jul-24', 'F3 Screen', 'Defect', 'Sarathkumar', 'Automated', '14-Aug-24', S + 8, ''],
    [448, '10-May-24', '', 'F11', 'Functional', 'Bavithra', 'Automated', '', '2024 Q2 Sprint 5', ''],
    [450, '10-May-24', '', 'F11', 'Functional', 'Bavithra', 'Automated', '', '2024 Q2 Sprint 5', ''],
    [471, '20-May-24', '20-May-24', 'F2 screen', 'Functional', 'Rajkiran', 'Automated', '', '2024 Q2 Sprint 5', ''],
    [734, '10-May-24', '', 'F3', 'Functional', 'Bavithra', 'Automation in progess', '', S + 8, 'Need to verify text color validation'],
    [735, '4-Jul-24', '4-Jul-24', 'F3 Screen', 'Functional', 'Sarathkumar', 'Hold', '', S + 7, 'Need to verify text color validation'],
    [736, '3-Jul-24', '3-Jul-24', 'F3 Screen', 'Defect', 'Chandra Sekar', 'Automated', '11-Sep-24', S + 9, ''],
    [737, '3-Jul-24', '3-Jul-24', 'F3 Screen', 'Functional', 'Rajkiran', 'Automated', '12-Sep-24', S + 9, ''],
    [739, '4-Jul-24', '4-Jul-24', 'F3 Screen', 'Functional', 'Rajkiran', 'Ready To Automate', '', S + 7, ''],
    [741, '4-Jul-24', '4-Jul-24', 'F3', 'Functional', 'Bavithra', 'Ready To Automate', '', S + 7, ''],
    [742, '4-Jul-24', '4-Jul-24', 'F3', 'Functional', 'Bavithra', 'Ready To Automate', '', S + 7, '']
  ];
  const tall = new Set([238, 239, 734, 735, 736, 737, 739, 741, 742]);
  const gapAfter = new Set([244, 448, 450, 471, 737, 739, 742]);
  const rows = raw.map(([n, f, g, h, i, k, m, d, p, q]) => ({ n, cells: [f, g, h, i, 'Approved', k, 'Kamal', m, d, '', p, q] }));
  const emptyRows = [921, 922, 923, 924, 925, 926];
</script>

{#snippet icon(name, size = 16)}
  <svg class="icon" width={size} height={size} viewBox="0 0 24 24" aria-hidden="true">
    {#each icons[name] as p}
      {#if p.t}
        <text x={p.x} y={p.y} font-size={p.size} fill={p.f} text-anchor="middle" class:serif={p.serif}>{p.t}</text>
      {:else if p.f}
        <path d={p.d} fill={p.f} />
      {:else}
        <path d={p.d} fill="none" stroke={p.s} stroke-width={p.w} stroke-dasharray={p.dash} />
      {/if}
    {/each}
  </svg>
{/snippet}

{#snippet combo(label, value, id = undefined)}
  <span class="combo">
    <select {id} aria-label={label}><option>{value}</option></select>
    {@render icon('chev', 10)}
  </span>
{/snippet}

{#snippet big(name, a, b)}
  <button class="big">{@render icon(name, 20)}<span>{a}</span><span class="with-chev">{b}{@render icon('chev', 7)}</span></button>
{/snippet}

{#snippet taskbar(last, extras)}
  <footer class="taskbar">
    <div class="weather">{@render icon('sunny', 24)}<div><div>93°F</div><div class="dim">Partly sunny</div></div></div>
    <div class="apps">
      <button class="app" aria-label="Start">{@render icon('win', 24)}</button>
      <div class="pill">{@render icon('magnify', 15)}<input aria-label="Search" placeholder="Search" /><span class="case">{@render icon('briefcase', 25)}</span></div>
      {#each taskApps as [name, open]}
        <button class="app" class:open aria-label={name}>{@render icon(name, 24)}</button>
      {/each}
      <button class="app current" aria-label="Current window">{@render icon(last, 24)}</button>
    </div>
    <div class="tray">
      {#if extras}
        {@render icon('up', 13)}
        <div class="lang">ENG<br />IN</div>
        <div class="net">{@render icon('monitor', 17)}{@render icon('sound', 17)}</div>
      {/if}
      <div class="clock">3:51 PM<br />9/12/2024</div>
      {#if extras}<span class="count">21</span>{/if}
    </div>
  </footer>
{/snippet}

<div class="desktop">
  <main class="screen cad">
    <header class="title">
      {@render icon('phoenix', 17)}
      <span>Phoenix - Public Safety System - [Kamal] Raj, Kamal - 01236CAD || 345CAD &#123;*&#125; || Svr-AutomationCAD:8833 || ProPhoenix Township Police Dept</span>
      <div class="controls">{@render icon('minus', 12)}{@render icon('restore', 12)}{@render icon('thinClose', 12)}</div>
    </header>
    <nav class="menus">{#each menus as m}<button>{m}</button>{/each}</nav>
    <div class="bar">
      <div class="counters">{#each counters as [l, n]}<span>{l}</span><b>{n}</b>{/each}</div>
      <div class="alerts">
        {@render icon('alert', 32)}
        <span class="bell">{@render icon('bell', 32)}</span><i class="red">70</i>
        <span class="usa">{@render icon('usa', 44)}</span><i>0</i>
        <span class="mail">{@render icon('mail', 40)}</span><i>0</i>
      </div>
      <div class="status-icons">
        {@render icon('wifi', 32)}{@render icon('mute', 32)}{@render icon('info', 30)}{@render icon('shield', 30)}{@render icon('fire', 30)}{@render icon('sunMoon', 30)}<span>15:51</span>
      </div>
    </div>
    <div class="docs">
      <button class="doc on">{@render icon('clip', 14)}F2-Take Call</button>
      <button class="doc">{@render icon('clip', 14)}F3-Dispatch</button>
      <span class="grow"></span>
      {@render icon('menuDrop', 8)}{@render icon('close', 9)}
    </div>

    <div class="work">
      <section class="left">
        <div class="call-tabs">{#each callTabs as t, i}<button class:on={i === 0} class:off={i === 1}>{t}</button>{/each}</div>
        <div class="strip">
          <div class="strip-in">
            <button class="w1">+</button><button class="w1">-</button><button class="w2">Ref</button><button class="w3">Recalculate</button><button class="w4">Show</button>
            <span class="strip-icons">{@render icon('infoBall', 16)}{@render icon('hydrant', 16)}{@render icon('google', 16)}{@render icon('tower', 16)}{@render icon('car', 16)}</span>
            <button>Select Location</button>
          </div>
        </div>

        <div class="map">
          <svg class="canvas" viewBox="0 0 872 588" preserveAspectRatio="xMidYMid slice" role="img" aria-label="Street map">
            <rect width="872" height="588" fill="#f4f5f6" />
            <path d={path(park, true)} fill="#cfefd8" />
            <path d={path(meadow, true)} fill="#d6f6e1" />
            <path d={path(river, true)} fill="#98d8ee" />
            <path d="M54 529l8 7 12 14-8 8-14-12zM28 560l8-8 10 10-8 12z" fill="#98d8ee" />
            {#each lanes as r}<path d={path(r)} class="lane" />{/each}
            {#each streets as r}<path d={path(r)} class="street" />{/each}
            <path d={path(canal)} class="canal" />
            {#each highways as r}<path d={path(r)} class="hwy-edge" /><path d={path(r)} class="hwy" />{/each}
            {#each majors as r}<path d={path(r)} class="major-edge" />{/each}
            {#each majors as r}<path d={path(r)} class="major" />{/each}
            {#each greenWays as r}<path d={path(r)} class="way" />{/each}
            {#each dashedWays as r}<path d={path(r)} class="way dashed" />{/each}
            <path d={path(stateLine)} class="state" />
            <path d="M390 487l8 6-4 12-9-6zM403 494l8 6-4 12-9-8z" fill="#98d8ee" />
            {#each roadLabels as r}<text class="road" text-anchor="middle" dominant-baseline="central" transform="translate({r.x} {r.y}) rotate({r.a})">{r.t}</text>{/each}
            <text class="river" text-anchor="middle" dominant-baseline="central" transform="translate(240 512) rotate(41)">Delaware River</text>
            {#each shields as s}
              <circle cx={s.x} cy={s.y} r="8" fill="#fff" stroke="#555" /><text class="shield" x={s.x} y={s.y + 4} text-anchor="middle">{s.n}</text>
            {/each}
            {#each places as p}
              <g transform="translate({p.x} {p.y})">
                <path d="M0 17l-7-7a11.500 11.500 0 1 1 14 0z" fill="#fff" stroke="#c8ced3" stroke-width="0.5" />
                <circle r="10" fill={p.c} /><path d={marks[p.k ?? 'dot']} fill="#fff" />
                {#each p.l as t, i}
                  <text class="poi" x={p.s * 15} y={(i - (p.l.length - 1) / 2) * 14 + 6} text-anchor={p.s < 0 ? 'end' : 'start'} fill={p.ink ?? '#546e7a'}>{t}</text>
                {/each}
              </g>
            {/each}
            <text class="poi" x="852" y="166" fill="#d0601a">Seafood</text>
            <text class="poi" x="-2" y="50" fill="#546e7a">al</text><text class="poi" x="-2" y="63" fill="#546e7a">al</text>
            <circle cx="720" cy="582" r="9" fill="#8f95f5" /><text class="p-mark" x="720" y="582" text-anchor="middle">P</text>
            <text class="road" x="808" y="541">Ca</text>
            <circle cx="435" cy="283" r="7" fill="#f3180f" stroke="#700" stroke-width="1" />
          </svg>
          <div class="types"><button class="on">Map</button><button>Satellite</button></div>
          <label class="traffic"><input type="checkbox" />Traffic Layer</label>
          <button class="full" aria-label="Toggle fullscreen">{@render icon('expand', 18)}</button>
          <button class="peg" aria-label="Street View">{@render icon('pegman', 32)}</button>
          <div class="zoom"><button aria-label="Zoom in">{@render icon('bigPlus', 20)}</button><button aria-label="Zoom out">{@render icon('bigMinus', 20)}</button></div>
          <div class="google"><span class="b">G</span><span class="r">o</span><span class="y">o</span><span class="b">g</span><span class="g">l</span><span class="r">e</span></div>
          <div class="credits"><a href="#keys">Keyboard shortcuts</a><span>Map data ©2024 Google</span><a href="#terms">Terms</a><a href="#error">Report a map error</a></div>
        </div>

        <form class="form">
          <div class="row ra">
            <label class="maroon" for="loc">Location</label><input id="loc" class="strong" value="413 W State St;SOP" />
            <input type="checkbox" checked aria-label="Verified" />{@render icon('infoBlue', 24)}
            <label for="cs">CS</label><input id="cs" value="Trenton" />{@render combo('State', 'NJ')}<input type="checkbox" class="dull" aria-label="Lock city" />
          </div>
          <div class="hint">School Board Association Nj State Of;SOP</div>
          <div class="row rb">
            <label for="pol"><span class="red">CFS</span> <span class="blue">Police</span></label><input id="pol" value="100" /><button type="button" aria-label="Find police code">{@render icon('lens', 16)}</button><input value="1" aria-label="Police priority" />
            <label class="red" for="fire">Fire</label><input id="fire" /><button type="button" aria-label="Find fire code">{@render icon('lens', 16)}</button><input aria-label="Fire priority" />
            <label class="green" for="ems">EMS</label><input id="ems" /><button type="button" aria-label="Find EMS code">{@render icon('lens', 16)}</button><input aria-label="EMS priority" />
            <label class="navy" for="oem">OEM</label><input id="oem" /><button type="button" aria-label="Find OEM code">{@render icon('lens', 16)}</button><input aria-label="OEM priority" />
            <label for="event">Event</label>{@render combo('Event', '--', 'event')}
          </div>
          <div class="row rc">
            <label for="comment">Comment</label><textarea id="comment">Auto o type Name Test</textarea>
            <input id="crit" type="checkbox" checked /><label class="crit" for="crit">Critical?</label>
          </div>
          <div class="row rd">
            <label for="ntype">Name</label>{@render combo('Name type', 'Other', 'ntype')}
            <input placeholder="Last Name" aria-label="Last Name" /><input placeholder="First Name" aria-label="First Name" /><input placeholder="Middle Name" aria-label="Middle Name" />
            <div class="notify"><input type="checkbox" checked aria-label="Notify" />{@render icon('alarm', 20)}</div>
          </div>
          <div class="row re">
            <label for="p1">Phone1</label>{@render combo('Phone1 type', '-')}<input id="p1" class="cut" value="(___) ___-____" />
            <button type="button" class="sos">RAPIDSOS{@render icon('cross', 13)}</button>
            <label for="p2">Phone2</label>{@render combo('Phone2 type', '-')}<input id="p2" value="(___) ___-____" />
            <label for="cb">Call Back Info</label><input id="cb" />
          </div>
          <div class="row rf">
            <label for="plate">Plate</label><input id="plate" />{@render combo('Plate state', 'NJ')}
            <input type="checkbox" checked aria-label="Use plate" />{@render combo('Plate type', '-')}
            <label class="src" for="src">Src</label>{@render combo('Source', '-', 'src')}<input class="time" value="__:__" aria-label="Time" />
            <div class="buttons"><button type="button">Handled By CT ?</button><button type="button">Dispatch Unit(s)</button><button type="button">Service By +</button><button type="button" class="xmit">Xmit</button><button type="button">Cancel</button></div>
          </div>
        </form>
      </section>

      <section class="report">
        <h1>Rpt: 15:50:33 ET: 01:22</h1>
        <div class="sizes"><span class="s1">A</span><span class="s2">A</span><span class="s3">A</span></div>
        <div class="paper">
          {#each sections as s}
            <h2>{s.title}</h2>
            {#if s.juris}<p><b>Juris:</b> <mark>{s.juris}</mark></p>{/if}
            {#each s.lines as l}<p>{l}</p>{/each}
          {/each}
        </div>
        <div class="activate"><div>Activate Windows</div><p>Go to Settings to activate Windows.</p></div>
        <div class="hscroll"><span class="al"></span><span class="thumb"></span><span class="ar"></span></div>
      </section>
    </div>
    <div class="statusbar"><span>Enter middle name</span><span class="date">9/12/2024</span><span></span></div>
    {@render taskbar('phoenix', true)}
  </main>

  <main class="screen browser">
    <div class="peek"></div>
    <header class="tabs">
      <button class="tab-list" aria-label="Tab list">{@render icon('chev', 11)}</button>
      {#each chromeTabs as [i, t], n}
        <div class="tab" class:on={n === 2}>{@render icon(i, 17)}<span>{t}</span><button aria-label="Close tab">{@render icon('close', 10)}</button></div>
      {/each}
      <button class="new" aria-label="New tab">{@render icon('plus', 13)}</button>
      <div class="controls">{@render icon('minus', 12)}{@render icon('restore', 12)}{@render icon('thinClose', 12)}</div>
    </header>
    <div class="address">
      <button class="faint" aria-label="Back">{@render icon('back', 14)}</button><button class="faint" aria-label="Forward">{@render icon('fwd', 14)}</button>
      <button aria-label="Reload">{@render icon('reload', 14)}</button><button aria-label="Home">{@render icon('home', 15)}</button>
      <div class="omni"><span class="tune">{@render icon('tune', 15)}</span>
        <input aria-label="Address" value="prophoenix.sharepoint.com/:x:/r/sites/AutomationScrum/_layouts/15/Doc.aspx?sourcedoc=%7B7E33B8E3-CD9F-4ADD-B142-CBF5B8EE53F9%7D&file=2024%20Testcases%20Track.xlsx&action=default&mobileredirect=true" />{@render icon('star', 17)}</div>
      <div class="ext">{@render icon('puzzle', 18)}<span class="vr"></span><span class="face small"></span>{@render icon('dots', 16)}</div>
    </div>
    <nav class="marks">
      {#each bookmarks as [i, t]}<a href="#{i}">{@render icon(i, 16)}{t}</a>{/each}
      <span class="grow"></span><span class="vr"></span><a href="#all">{@render icon('folderLine', 16)}All Bookmarks</a>
    </nav>

    <div class="office">
      <div class="brand">{@render icon('waffle', 16)}{@render icon('excel', 20)}<span>2024 Testcases Track</span>{@render icon('cloud', 15)}{@render icon('chev', 9)}</div>
      <div class="search">{@render icon('magnify', 15)}<input aria-label="Search tools" placeholder="Search for tools, help, and more (Alt + Q)" /></div>
      <div class="me">{@render icon('gear', 17)}<svg class="icon" width="32" height="32" viewBox="0 0 32 32" aria-label="Account"><clipPath id="round"><circle cx="16" cy="16" r="16" /></clipPath><g clip-path="url(#round)"><rect width="32" height="32" fill="#cfc8b4" /><path d="M3 32q0-12 9-14h9q8 2 9 14z" fill="#f0efee" /><ellipse cx="18" cy="11" rx="6" ry="8" fill="#9a6248" /><path d="M11 9q0-9 8-9t7 9q-3-5-9-4-5 0-6 4zM14 14q4 3 8 0-1 6-4 6t-4-6z" fill="#1d1715" /></g></svg></div>
    </div>
    <div class="rtabs">
      <nav>{#each ribbonTabs as t, i}<button class:on={i === 1}>{t}</button>{/each}</nav>
      <div class="acts"><button>{@render icon('comment', 15)}Comments</button><button>{@render icon('catchUp', 15)}Catch up</button><button>{@render icon('pencil', 15)}Editing{@render icon('chev', 10)}</button><button class="share">{@render icon('people', 15)}Share{@render icon('chev', 10)}</button></div>
    </div>

    <div class="ribbon">
      <div class="grp"><div class="col"><button aria-label="Undo">{@render icon('undo', 16)}</button><button aria-label="Redo">{@render icon('redo', 16)}</button></div><small>Undo</small></div>
      <div class="grp"><div class="clipb"><button class="big paste">{@render icon('paste', 22)}<span>Paste</span>{@render icon('chev', 7)}</button>
        <div class="stack"><button>{@render icon('cut', 15)}Cut</button><button>{@render icon('copy', 15)}Copy</button><button>{@render icon('painter', 15)}Format Painter</button></div></div><small>Clipboard</small></div>
      <div class="grp fonts"><div class="line1"><div class="pair">{@render combo('Font', 'Calibri Light (Hea...')}{@render combo('Font size', '11')}</div><button class="grow-a">A<sup>˄</sup></button><button class="grow-b">A<sup>˅</sup></button></div>
        <div class="line2"><button><b>B</b></button><button><em>I</em></button><button><u>U</u></button><button><u class="dbl">D</u></button><button><s>ab</s></button><button>{@render icon('border', 15)}{@render icon('chev', 7)}</button><button>{@render icon('bucket', 16)}{@render icon('chev', 7)}</button><button>{@render icon('fontColor', 15)}{@render icon('chev', 7)}</button></div><small>Font</small></div>
      <div class="grp aligns"><div class="split"><div class="nine">
        <button aria-label="Top">{@render icon('alTop', 16)}</button><button aria-label="Middle">{@render icon('alMid', 16)}</button><button class="sel" aria-label="Bottom">{@render icon('alBot', 16)}</button>
        <button aria-label="Left">{@render icon('left', 16)}</button><button class="sel" aria-label="Center">{@render icon('center', 16)}</button><button aria-label="Right">{@render icon('right', 16)}</button>
        <button aria-label="Decrease indent">{@render icon('outdent', 16)}</button><button aria-label="Increase indent">{@render icon('indent', 16)}</button><button aria-label="Orientation">{@render icon('orient', 15)}{@render icon('chev', 7)}</button></div>
        <div class="wraps"><button class="sel">{@render icon('wrap', 15)}Wrap Text</button><button>{@render icon('merge', 15)}Merge &amp; Center{@render icon('chev', 7)}</button></div></div><small>Alignment</small></div>
      <div class="grp nums">{@render combo('Number format', 'Date')}<div class="line2"><button>$€{@render icon('chev', 7)}</button><button>%</button><button><b>,</b></button><button aria-label="Decrease decimal">{@render icon('dec', 16)}</button><button aria-label="Increase decimal">{@render icon('inc', 16)}</button></div><small>Number</small></div>
      <div class="grp styles"><div class="bigs">{@render big('cond', 'Conditional', 'Formatting')}{@render big('table', 'Format As', 'Table')}{@render big('cell', 'Cell', 'Styles')}</div><small>Styles</small></div>
      <div class="grp cells-g"><div class="bigs">{@render big('insert', 'Insert', '')}{@render big('remove', 'Delete', '')}{@render big('format', 'Format', '')}</div><small>Cells</small></div>
      <div class="grp edits"><div class="bigs"><div class="stack2"><button>{@render icon('sigma', 15)}AutoSum{@render icon('chev', 7)}</button><button>{@render icon('eraser', 15)}Clear{@render icon('chev', 7)}</button></div>{@render big('sort', 'Sort &', 'Filter')}{@render big('find', 'Find &', 'Select')}</div><small>Editing</small></div>
      <div class="grp"><div class="bigs">{@render big('addins', 'Add-ins', '')}</div><small>Add-ins</small></div>
      <div class="last">{@render icon('chev', 12)}</div>
    </div>

    <div class="fbar">
      <div class="box">{@render combo('Name box', 'N737')}</div>
      <div class="box fx">{@render icon('close', 13)}<span>✓</span><em>fx</em></div>
      <div class="box"><input aria-label="Formula" value="9/12/2024" />{@render icon('chev', 12)}</div>
    </div>

    <div class="sheet">
      <table>
        <colgroup><col class="c0" />{#each columns as c, i}<col class="c{i + 1}" />{/each}</colgroup>
        <thead>
          <tr class="letters"><th class="corner"><span></span></th>{#each columns as [c]}<th class:on={c === 'N'}><div>{c}</div></th>{/each}</tr>
          <tr class="names"><th class="num hid">1</th>
            {#each columns as [c, t]}<th><div>{t}</div>{#if t}<button aria-label="Filter {t}">{@render icon(c === 'L' ? 'filter' : 'chev', c === 'L' ? 12 : 9)}</button>{/if}</th>{/each}</tr>
        </thead>
        <tbody>
          {#each rows as r}
            <tr class:tall={tall.has(r.n)}><th class="num" class:hid={gapAfter.has(r.n)} class:cur={r.n === 737}>{r.n}</th>
              {#each r.cells as c, i}<td class:picked={r.n === 737 && i === 8}><div>{c}</div></td>{/each}</tr>
          {/each}
          {#each emptyRows as n, k}
            <tr class="empty" class:first={k === 0}><th class="num">{n}</th>{#each columns as c}<td></td>{/each}</tr>
          {/each}
        </tbody>
      </table>
      <div class="vscroll"><span class="au"></span><span class="thumb"></span><span class="ad"></span></div>
    </div>
    <div class="hs2"><span class="al"></span><span class="thumb"></span><span class="ar"></span></div>
    <div class="sheets">{@render icon('prev', 13)}{@render icon('next', 13)}{@render icon('list', 14)}<button class="on">Test case</button><button>Report</button>{@render icon('plus', 14)}</div>
    <div class="wstatus"><span>Workbook Statistics</span><span class="grow"></span>{@render icon('chev', 9)}{@render icon('keyboard', 15)}{@render icon('help', 14)}{@render icon('feedback', 15)}{@render icon('minus', 13)}<button>100%{@render icon('chev', 9)}</button>{@render icon('plus', 13)}</div>
    {@render taskbar('blank', false)}
  </main>
</div>

<style>
  :global(body) { background: #000; font-family: 'Open Sans', 'Noto Sans', sans-serif; font-size: 11px; color: #111; }
  * { box-sizing: border-box; }
  button, input, select, textarea { font: inherit; color: inherit; margin: 0; padding: 0; border: 0; background: none; border-radius: 0; min-width: 0; }
  button { white-space: nowrap; display: flex; align-items: center; }
  p, h1, h2 { margin: 0; }
  a { color: inherit; text-decoration: none; }
  .icon { display: block; flex: none; overflow: visible; font-family: 'Liberation Sans', sans-serif; font-weight: bold; }
  .serif { font-family: 'Liberation Serif', serif; font-style: italic; }
  .grow { flex: 1; }
  .combo { display: grid; align-items: center; min-width: 0; }
  .combo select { grid-area: 1 / 1; appearance: none; width: 100%; height: 100%; }
  .combo :global(svg) { grid-area: 1 / 1; justify-self: end; margin-right: 4px; pointer-events: none; }
  .desktop { display: grid; grid-template-columns: 1fr 1fr; background: #000; align-items: start; }
  .screen { min-width: 0; display: flex; flex-direction: column; }
  .browser { margin-top: 91px; position: relative; background: #f5f5f5; color: #444; }
  .controls { display: flex; gap: 34px; color: #777; }

  /* dispatch window */
  .cad { background: #f0f8ff; min-height: 1080px; }
  .title { height: 23px; background: #fff; border-bottom: 2px solid #5a7490; display: grid; grid-template-columns: 1fr auto 1fr; align-items: center; padding: 0 18px 0 1px; font-size: 13px; }
  .title .controls { justify-self: end; }
  .menus { height: 24px; background: #2b579a; border-bottom: 1px solid #8fb2e0; display: flex; gap: 36px; padding-left: 21px; color: #fff; font-size: 12px; }
  .bar { height: 42px; background: #2f4b60; border-bottom: 1px solid #8b98a3; display: grid; grid-template-columns: 35% auto 1fr; align-items: center; color: #eee; }
  .counters { display: flex; align-items: center; padding-left: 14px; gap: 3px; font-size: 18px; }
  .counters b { background: #f00; border-radius: 50%; width: 32px; height: 32px; line-height: 32px; text-align: center; font-family: 'Liberation Sans', sans-serif; font-size: 20px; color: #fff; margin-right: 5px; }
  .alerts { display: flex; align-items: center; color: #fff; }
  .alerts i { background: #7b7b7b; border-radius: 50%; width: 22px; height: 22px; font-style: normal; font-size: 12px; line-height: 22px; text-align: center; align-self: start; margin-left: -2px; color: #e8e8e8; }
  .alerts i.red { background: #f00; color: #fff; }
  .bell { margin-left: 5px; }
  .usa, .mail { margin-left: 6px; }
  .status-icons { justify-self: end; display: flex; align-items: center; gap: 6px; padding-right: 9px; font-size: 17px; color: #e8e8e8; }
  .docs { height: 21px; background: #f0f0f0; border-bottom: 1px solid #7b97b8; display: flex; align-items: center; padding: 2px 4px 0 5px; gap: 4px; }
  .doc { height: 18px; gap: 4px; padding: 0 10px 0 14px; border: 1px solid #9aa; border-bottom: 0; border-top-left-radius: 12px; background: #ece9d8; margin-right: -4px; font-size: 11px; width: 100px; }
  .doc.on { background: #f7fbff; color: #daa520; font-weight: bold; width: 112px; }
  .docs > :global(svg) { margin-right: 5px; }
  .work { flex: 1; display: grid; grid-template-columns: 37fr 43fr; }
  .left { border-left: 1px solid #99a; display: flex; flex-direction: column; min-width: 0; padding-left: 6px; }
  .call-tabs { height: 28px; display: flex; align-items: end; }
  .call-tabs button { height: 21px; padding: 0 10px; border: 1px solid #e2e2e2; border-bottom: 0; border-left: 0; background: #f3f7fa; font-size: 12px; }
  .call-tabs .on { height: 23px; background: #f8fcff; font-weight: bold; padding: 0 6px; }
  .call-tabs .off { color: #888; }
  .strip { height: 33px; display: flex; border-top: 1px solid #e6e6e6; }
  .strip-in { background: #f5fffe; padding-right: 16px; display: flex; align-items: center; border-left: 3px dotted #bbb; margin-left: 3px; font-size: 15px; font-weight: bold; color: #daa520; padding-left: 14px; }
  .w1 { width: 34px; }
  .w2 { width: 52px; }
  .w3 { width: 112px; }
  .w4 { width: 60px; }
  .strip-icons { display: flex; gap: 10px; border-left: 1px solid #999; height: 100%; align-items: center; padding: 0 19px 0 8px; }

  .map { position: relative; height: 589px; margin-right: 9px; overflow: hidden; border-bottom: 1px solid #e5e5e5; }
  .canvas { display: block; width: 100%; height: 588px; }
  .canvas path { stroke-linejoin: round; }
  .lane, .street, .canal, .hwy, .hwy-edge, .major, .major-edge, .way, .state { fill: none; }
  .lane { stroke: #d3dbe4; stroke-width: 2; }
  .street { stroke: #cdd7e0; stroke-width: 6; }
  .canal { stroke: #98d8ee; stroke-width: 11; }
  .hwy { stroke: #d8dfe8; stroke-width: 25; }
  .hwy-edge { stroke: #bcc7d3; stroke-width: 27; }
  .major { stroke: #d8dfe8; stroke-width: 12; }
  .major-edge { stroke: #c2ccd8; stroke-width: 14; }
  .way { stroke: #6dbb9e; stroke-width: 1; }
  .dashed { stroke: #8fcfb0; stroke-dasharray: 4 2; }
  .state { stroke: #667; stroke-width: 1; stroke-dasharray: 2 2; }
  .canvas text { font-family: Roboto, sans-serif; font-size: 13px; paint-order: stroke; stroke: #fff; stroke-width: 3px; }
  .canvas .road { fill: #3e4f63; font-weight: 500; stroke: #f4f5f6; }
  .canvas .poi { font-size: 14px; }
  .canvas .river { fill: #2b8fa5; font-size: 15px; stroke: none; }
  .canvas .shield { font-size: 10px; stroke: none; fill: #333; }
  .canvas .p-mark { fill: #44f; stroke: none; font-size: 14px; font-weight: bold; }
  .types, .full, .peg, .zoom, .traffic, .google, .credits { position: absolute; }
  .types, .full, .peg, .zoom { background: #fff; box-shadow: 0 1px 4px #0004; border-radius: 2px; }
  .types { left: 10px; top: 10px; display: flex; font: 18px Roboto, sans-serif; color: #565656; }
  .types button { height: 40px; padding: 0 17px; }
  .types .on { color: #000; font-weight: 500; border-right: 1px solid #eee; }
  .full, .peg { right: 10px; width: 40px; height: 40px; justify-content: center; }
  .full { top: 10px; }
  .peg { top: 411px; }
  .zoom { right: 10px; top: 483px; width: 40px; }
  .zoom button { height: 40px; width: 28px; margin: 0 6px; justify-content: center; }
  .zoom button + button { border-top: 1px solid #ddd; }
  .traffic { left: 187px; top: 0; height: 25px; background: #fff; border: 1px solid #000; display: flex; align-items: center; gap: 3px; padding: 0 3px 0 7px; font-family: 'Liberation Sans', sans-serif; font-size: 11px; }
  .traffic input { width: 13px; height: 13px; }
  .google { left: 9px; bottom: 1px; font: 22px/24px Roboto, sans-serif; text-shadow: 0 0 2px #fff; }
  .google .b { color: #4285f4; }
  .google .r { color: #ea4335; }
  .google .y { color: #fbbc05; }
  .google .g { color: #34a853; }
  .credits { right: 0; bottom: 0; height: 14px; background: #f5f5f5cc; display: flex; gap: 12px; padding: 0 7px 0 5px; font: 10px/14px Roboto, sans-serif; color: #000; }

  .form { flex: 1; margin: 7px 0 0 -6px; background: linear-gradient(90deg, #e6e6fa, #f0f8ff 85%); font-size: 12px; padding-right: 16px; }
  .row { display: grid; height: 20px; margin-top: 4px; }
  .row label { text-align: right; padding-right: 4px; white-space: nowrap; align-self: center; }
  .row input:not([type='checkbox']), .row textarea, .row .combo { background: #fff; border: 1px solid #a9adb3; padding: 0 5px; width: 100%; height: 100%; }
  .row .combo { padding: 0 0 0 4px; }
  .row input::placeholder { color: #aaa; }
  .row textarea { resize: none; padding-top: 1px; font-size: 12px; }
  .row input[type='checkbox'], .notify input { appearance: none; width: 13px; height: 13px; background: #fff; border: 2px solid; border-color: #777 #ddd #ddd #777; margin: 2px; display: grid; place-items: center; }
  .row input[type='checkbox']:checked::before { content: '✓'; font: bold 11px/9px 'DejaVu Sans', sans-serif; color: #000; }
  .row input.dull { background: #eee; }
  .ra { grid-template-columns: 66px 1fr 18px 27px 52px 128px 56px 16px; height: 26px; margin-top: 0; align-items: center; }
  .ra .strong { font-size: 15px; font-weight: bold; padding: 0 6px; }
  .ra #cs, .ra .combo { height: 20px; }
  .maroon { color: #8b0000; font-size: 14px; }
  .hint { height: 16px; line-height: 16px; padding-left: 71px; font-size: 12px; margin-bottom: -1px; }
  .rb { grid-template-columns: 66px 70px 21px 21px 29px 70px 21px 20px 31px 70px 21px 20px 35px 70px 21px 20px 66px 1fr; height: 19px; }
  .rb label:not(:first-child) { padding-right: 2px; }
  .rb button { border: 1px solid #777; background: #e4e9ef; justify-content: center; }
  .red { color: #f00; }
  .blue { color: #00f; }
  .green { color: #006400; }
  .navy { color: #000080; }
  .rc { grid-template-columns: 66px 617px 18px 1fr; height: 36px; margin-top: 3px; }
  .row.rc label { align-self: start; }
  .row .crit { color: #f00; font-weight: bold; text-align: left; padding-left: 3px; }
  .rd { grid-template-columns: 66px 70px 120px 110px 86px 100px; margin-top: 3px; }
  .notify { background: #f0f0f0; display: flex; justify-content: space-between; padding: 0 6px 0 4px; }
  .re { grid-template-columns: 67px 36px 82px 70px 116px 35px 80px 77px 191px; }
  .row .cut { width: 80px; }
  .sos { background: #ffcf80; font: 9px Lato, sans-serif; gap: 3px; padding: 0 4px; }
  .rf { grid-template-columns: 67px 120px 67px 20px 64px 31px 44px 49px 1fr; }
  .rf .src { color: #8b0000; font-weight: bold; }
  .row.rf .time { width: 37px; margin: 0 6px; padding: 0 2px; }
  .buttons { display: flex; gap: 5px; font-size: 11px; }
  .buttons button { border: 1px solid #c4c4c4; background: #fdfdfd; border-radius: 3px; padding: 0 8px; white-space: nowrap; }
  .buttons .xmit { background: #1f6fc9; color: #fff; border: 1px solid; border-color: #9bd #024 #024 #9bd; border-radius: 0; padding: 0 12px; }

  .report { background: #fff; border-right: 1px solid #aaa; display: flex; flex-direction: column; min-width: 0; position: relative; }
  .report h1 { background: #0078d7; color: #fff; font-size: 16px; font-weight: 600; height: 23px; line-height: 19px; padding-left: 5px; border: 1px solid #000; border-color: #001 #39f #6ad #001; }
  .sizes { position: absolute; right: 24px; top: 27px; display: flex; gap: 12px; align-items: baseline; color: #999; }
  .s1 { font-size: 10px; }
  .s2 { font-size: 13px; }
  .s3 { font-size: 16px; }
  .paper { flex: 1; padding: 10px 41px 0 11px; font-family: 'Liberation Serif', serif; font-size: 14px; line-height: 16px; color: #000; }
  .paper h2 { font-size: 16px; line-height: 18px; border-bottom: 1px solid #aaa; }
  .paper p { min-height: 16px; }
  .paper p + h2 { margin-top: 16px; }
  mark { background: #f8221a; color: #ff3; font-weight: bold; padding: 0 3px; }
  .activate { position: absolute; right: 88px; bottom: 24px; color: #bbb; font-size: 19px; line-height: 26px; }
  .activate p { font-size: 14px; line-height: 20px; }
  .hscroll { height: 14px; display: flex; align-items: center; padding: 0 5px; gap: 6px; background: #fcfcfc; }
  .hscroll .thumb { flex: 1; height: 9px; background: #8b8b8b; border-radius: 5px; margin-right: 12px; }
  .al, .ar, .au, .ad { border: 4px solid transparent; }
  .al { border-left: 0; border-right: 6px solid #888; }
  .ar { border-right: 0; border-left: 6px solid #888; }
  .au { border-top: 0; border-bottom: 6px solid #888; }
  .ad { border-bottom: 0; border-top: 6px solid #888; }
  .statusbar { height: 25px; border-top: 1px solid #777; background: #c4d9f5; display: grid; grid-template-columns: 1fr 91px 100px; gap: 2px; padding: 3px 0 3px 2px; border-bottom: 2px solid #5b82cc; font-size: 14px; line-height: 16px; }
  .statusbar span { border: 1px solid #6a8fd0; background: linear-gradient(#cfe0f8, #92b3e6); padding-left: 3px; }
  .statusbar .date { font-size: 12px; }

  .taskbar { height: 48px; background: linear-gradient(90deg, #dbe8f1, #cfdde8 15%, #dbe9f2 45%, #d5dfe9 60%, #dadde8 72%, #d5e3ec 88%, #dcebf1); display: grid; grid-template-columns: 1fr auto 1fr; align-items: center; font-size: 11px; line-height: 16px; color: #222; }
  .weather { display: flex; align-items: center; gap: 7px; padding-left: 20px; }
  .dim { color: #666; }
  .apps { display: flex; align-items: center; height: 48px; }
  .app { width: 44px; height: 40px; justify-content: center; position: relative; }
  .app.open::after, .app.current::after { content: ''; position: absolute; bottom: 0; width: 6px; height: 3px; border-radius: 2px; background: #777; }
  .app.current { background: #eef3f7; border-radius: 4px; width: 38px; margin-left: 3px; }
  .app.current::after { width: 16px; background: #0c78d4; }
  .pill { width: 217px; height: 32px; margin: 0 3px; border-radius: 16px; background: #f3f6f9; border: 1px solid #c9d2da; display: flex; align-items: center; gap: 11px; padding-left: 10px; }
  .pill input { flex: 1; font-size: 13px; width: 80px; }
  .pill input::placeholder { color: #666; }
  .case { width: 56px; height: 30px; border-radius: 15px; background: #e2e2e2; display: grid; place-items: center; }
  .tray { justify-self: end; display: flex; align-items: center; gap: 16px; padding-right: 17px; }
  .lang { text-align: center; }
  .net { display: flex; gap: 6px; margin-left: 3px; }
  .clock { text-align: right; margin-left: -2px; }
  .count { background: #0c78d4; color: #fff; width: 20px; height: 20px; line-height: 19px; border-radius: 50%; text-align: center; margin-left: -10px; }

  /* browser window */
  .peek { position: absolute; left: 866px; top: 0; width: 188px; height: 3px; background: #0a5f9e; box-shadow: 0 1px 3px #000; }
  .tabs { height: 40px; background: #2b2b2b; display: flex; align-items: center; color: #ddd; font-size: 12px; padding: 6px 18px 0 6px; }
  .tab-list { width: 28px; height: 28px; border-radius: 8px; background: #3c3c3c; justify-content: center; margin: 0 5px 6px 0; }
  .tab { width: 238px; height: 34px; display: flex; align-items: center; gap: 8px; padding: 0 14px 6px 8px; border-radius: 8px 8px 0 0; }
  .tab span { flex: 1; overflow: hidden; white-space: nowrap; }
  .tab.on { background: #3c3c3c; width: 231px; }
  .new { margin: 0 0 6px 15px; }
  .tabs .controls { margin: 0 0 6px auto; color: #888; }
  .address { height: 47px; background: #3c3c3c; display: flex; align-items: center; color: #ccc; padding: 0 18px 0 14px; }
  .address > button { width: 36px; padding-left: 1px; }
  .address .faint { color: #888; }
  .omni { flex: 1; height: 34px; border-radius: 17px; background: #282828; display: flex; align-items: center; gap: 8px; padding: 0 15px 0 4px; color: #d5d5d5; margin: 0 17px 0 -1px; }
  .omni input { flex: 1; font-size: 13px; }
  .tune { width: 24px; height: 24px; border-radius: 50%; background: #3c3c3c; display: grid; place-items: center; }
  .ext { display: flex; align-items: center; gap: 16px; }
  .vr { width: 1px; height: 16px; background: #777; }
  .face.small { width: 20px; height: 20px; border-radius: 50%; background: conic-gradient(#5d2a63, #301a3e 40%, #7fc5c9 55%, #d8c9d4 70%, #7c2f52); }
  .marks { height: 34px; background: #3c3c3c; border-bottom: 1px solid #555; display: flex; align-items: center; gap: 16px; padding: 0 14px 2px 13px; color: #d6d6d6; font-size: 12px; }
  .marks a { display: flex; align-items: center; gap: 6px; white-space: nowrap; }
  .office { height: 46px; display: grid; grid-template-columns: 686fr 468fr 742fr; align-items: center; padding: 0 8px 0 16px; }
  .brand { display: flex; align-items: center; font-size: 13px; gap: 8px; color: #333; }
  .brand span { margin-left: 16px; }
  .brand > :global(svg:first-child) { margin-right: 22px; }
  .search { height: 33px; background: #fafafa; border: 1px solid #e2e2e2; border-bottom-color: #ccc; border-radius: 5px; display: flex; align-items: center; gap: 12px; padding: 0 16px; color: #777; }
  .search input { flex: 1; font-size: 13px; }
  .search input::placeholder { color: #777; }
  .me { display: flex; justify-content: end; align-items: center; gap: 24px; }
  .rtabs { height: 38px; display: flex; justify-content: space-between; padding: 6px 8px 8px 19px; }
  .rtabs nav { display: flex; gap: 22px; font-size: 13px; }
  .rtabs nav button { border-bottom: 2px solid transparent; margin-bottom: -3px; }
  .rtabs nav .on { font-weight: bold; border-color: #217346; }
  .acts { display: flex; gap: 8px; color: #222; font-size: 12px; }
  .acts button { height: 24px; background: #fff; border: 1px solid #ccc; border-radius: 4px; padding: 0 7px; gap: 5px; }
  .acts .share { background: #217a3c; color: #fff; border-color: #217a3c; }
  .ribbon { height: 100px; margin: 0 8px; background: #fff; border-radius: 8px; box-shadow: 0 1px 4px #0003; display: grid; grid-template-columns: 45px 169px 271px 248px 167px 192px 138px 198px 62px 1fr; padding: 4px 0; font-size: 11px; line-height: 16px; }
  .grp { border-right: 1px solid #ccc; display: flex; flex-direction: column; min-width: 0; }
  .grp small { margin-top: auto; text-align: center; font-size: 10px; line-height: 17px; }
  .col { display: grid; justify-content: center; gap: 14px; padding-top: 13px; }
  .clipb { display: flex; padding-left: 13px; gap: 16px; }
  .stack { display: grid; grid-template-rows: 26px 26px 26px; }
  .stack button { gap: 5px; }
  .big { flex-direction: column; line-height: 16px; }
  .paste { padding-top: 8px; gap: 4px; }
  .paste span { margin-top: 4px; }
  .big span + span { min-height: 16px; }
  .with-chev { display: flex; align-items: center; gap: 2px; }
  .fonts, .nums { padding: 0 8px; }
  .line1 { display: flex; padding-top: 10px; }
  .pair { display: grid; grid-template-columns: 128px 52px; border: 1px solid #bbb; border-radius: 3px; height: 24px; }
  .pair .combo { padding-left: 8px; }
  .pair .combo + .combo { border-left: 1px solid #ccc; }
  .pair .combo :global(svg), .nums .combo :global(svg) { width: 7px; }
  .grow-a, .grow-b { font-size: 15px; margin-left: 8px; }
  .grow-b { font-size: 13px; margin-left: 12px; }
  sup { color: #2b7cd3; font-size: 9px; align-self: start; }
  .line2 { display: flex; padding: 9px 0 0 6px; height: 33px; gap: 12px; font-size: 14px; }
  .line2 button { min-width: 15px; gap: 4px; justify-content: center; }
  .dbl { text-decoration-style: double; }
  .split { display: flex; }
  .nine { display: grid; grid-template-columns: 27px 28px 40px; grid-auto-rows: 24px; row-gap: 2px; width: 108px; padding-left: 9px; border-right: 1px solid #ccc; }
  .nine button { justify-content: center; gap: 4px; }
  .nine button:nth-child(3n) { width: 27px; }
  .nine button:last-child { width: 40px; }
  .sel { background: #e8e8e8; border: 1px solid #777; border-radius: 4px; }
  .wraps { padding: 10px 0 0 5px; }
  .wraps button { height: 24px; gap: 7px; padding: 0 5px 0 6px; }
  .wraps button + button { margin-top: 14px; }
  .nums .combo { margin-top: 10px; height: 24px; border: 1px solid #bbb; border-radius: 3px; padding-left: 8px; width: 129px; }
  .bigs { display: flex; justify-content: center; padding-top: 9px; gap: 12px; }
  .bigs .big span:first-of-type { margin-top: 6px; }
  .cells-g .bigs { gap: 9px; }
  .styles .bigs { gap: 7px; }
  .stack2 { display: grid; grid-template-rows: 26px 26px; margin-top: -6px; }
  .stack2 button { gap: 6px; }
  .edits .bigs { gap: 8px; }
  .last { display: flex; justify-content: end; align-items: end; padding: 0 9px 6px; }
  .fbar { display: grid; grid-template-columns: 123px 67px 1fr; gap: 8px; padding: 4px 8px 0; height: 43px; font-size: 12px; align-items: start; }
  .box { height: 24px; background: #fff; border: 1px solid #ccc; border-radius: 4px; display: flex; align-items: center; padding: 0 8px; }
  .box .combo { flex: 1; height: 100%; margin: 0 -5px; }
  .box input { flex: 1; }
  .fx { justify-content: space-between; padding: 0 5px; color: #aaa; }
  .fx em { font: italic 15px 'Liberation Serif', serif; color: #222; }

  .sheet { display: grid; grid-template-columns: 1fr 12px; background: #fff; }
  table { table-layout: fixed; width: 100%; border-spacing: 0; border-collapse: separate; font-family: Lato, 'Open Sans', sans-serif; font-size: 13px; line-height: 17px; color: #111; }
  .c0 { width: 43px; }
  .c1 { width: 98px; }
  .c2 { width: 92px; }
  .c3 { width: 155px; }
  .c4 { width: 145px; }
  .c5, .c6 { width: 160px; }
  .c7 { width: 190px; }
  .c8, .c9, .c10 { width: 161px; }
  .c11 { width: 163px; }
  td, th { padding: 0; height: 20px; font-weight: normal; white-space: nowrap; overflow: hidden; text-align: center; border-right: 1px solid #000; border-bottom: 1px solid #000; vertical-align: bottom; }
  td:last-child { text-align: left; padding-left: 3px; border-right: 0; }
  tr > :nth-child(2) div { margin-left: -12px; }
  .tall td, .tall th { height: 22px; }
  .letters th { height: 19px; background: #f5f5f5; border-color: #ddd; border-bottom: 1px solid #aaa; font-size: 14px; line-height: 17px; color: #555; }
  .letters .on { background: #c9e8d6; border-bottom: 2px solid #217346; color: #217346; }
  .corner span { display: block; margin-left: auto; margin-right: 3px; width: 12px; height: 12px; background: linear-gradient(135deg, transparent 50%, #b5b5b5 50%); }
  .names th { height: 60px; background: #edb185; white-space: normal; position: relative; border-bottom-color: #777; line-height: 19px; }
  .names th:nth-child(2) div { width: 110px; }
  .names th:nth-child(3) div { padding: 0 10px; }
  .names button { position: absolute; right: 1px; bottom: 1px; width: 16px; height: 16px; border: 1px solid #999; border-radius: 3px; background: #fff; justify-content: center; color: #555; }
  th.num, .names th.num { background: #f5f5f5; border-color: #ddd; border-right-color: #bbb; text-align: right; padding-right: 5px; color: #666; font-size: 14px; line-height: 16px; vertical-align: middle; }
  th.num.hid { border-bottom: 3px double #888; }
  th.num.cur { background: #c9e8d6; color: #217346; border-right: 2px solid #217346; }
  .picked { outline: 2px dashed #217346; outline-offset: -2px; }
  .empty td { border-color: #ddd; }
  .empty.first td:nth-child(6), .empty.first td:nth-child(7), .empty.first td:nth-child(9), .empty.first td:nth-child(10) { border-right-color: #000; }
  .vscroll { margin-top: 79px; background: #e6e6e6; display: flex; flex-direction: column; align-items: center; padding: 6px 0 5px; }
  .vscroll .thumb { width: 7px; height: 44px; background: #8b8b8b; border-radius: 4px; margin-top: 9px; }
  .ad { margin-top: auto; }
  .hs2 { height: 12px; margin: 0 12px 0 43px; background: #e6e6e6; display: flex; align-items: center; padding: 0 5px; }
  .hs2 .thumb { width: 48%; height: 7px; border-radius: 4px; background: #8b8b8b; margin: 0 auto 0 14%; }
  .sheets { height: 33px; border-bottom: 1px solid #ddd; display: flex; align-items: center; gap: 19px; padding: 0 9px; font-size: 12px; color: #333; }
  .sheets button { height: 24px; }
  .sheets .on { background: #b9d7a5; font-weight: bold; padding: 0 6px; margin-right: -7px; margin-left: -7px; position: relative; border-radius: 2px; }
  .sheets .on::after { content: ''; position: absolute; left: 6px; right: 6px; bottom: -6px; height: 3px; background: #217346; }
  .wstatus { height: 22px; background: #fff; display: flex; align-items: center; gap: 18px; padding: 0 21px; font-size: 11px; }
  .wstatus button { height: 18px; border: 1px solid #ccc; border-radius: 3px; padding: 0 4px; gap: 4px; }
</style>
